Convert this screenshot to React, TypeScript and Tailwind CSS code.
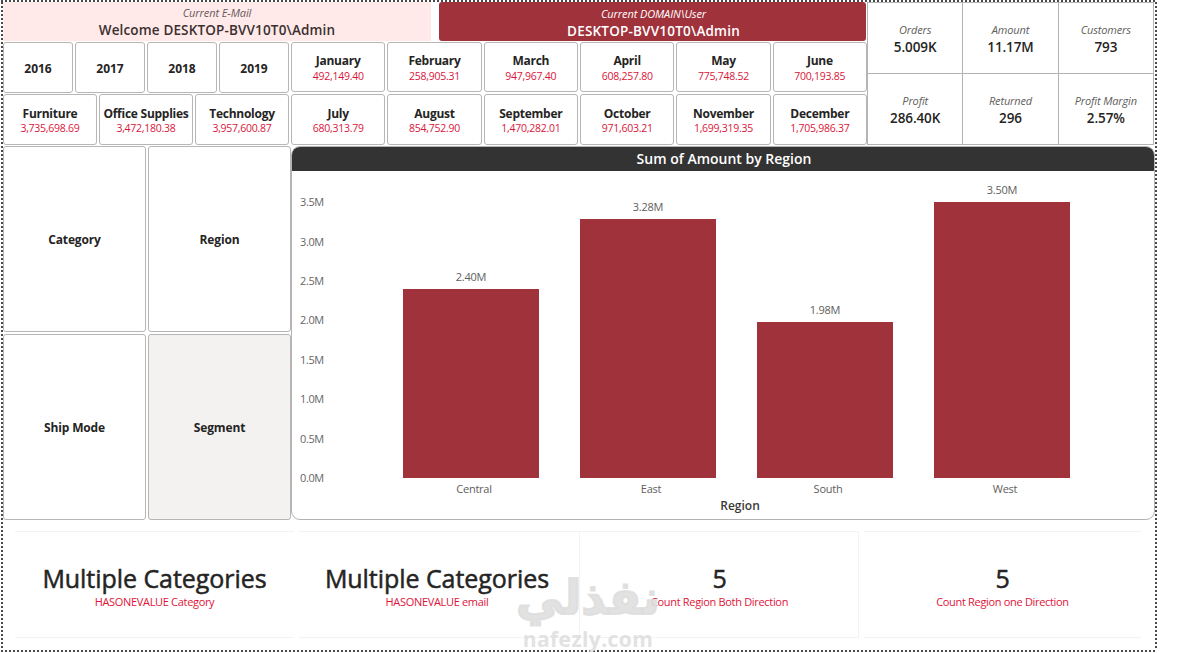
import clsx from "clsx";

type Tile = {
  label: string;
  value: string;
};

const years = ["2016", "2017", "2018", "2019"];

const categories: Tile[] = [
  { label: "Furniture", value: "3,735,698.69" },
  { label: "Office Supplies", value: "3,472,180.38" },
  { label: "Technology", value: "3,957,600.87" },
];

const months: Tile[] = [
  { label: "January", value: "492,149.40" },
  { label: "February", value: "258,905.31" },
  { label: "March", value: "947,967.40" },
  { label: "April", value: "608,257.80" },
  { label: "May", value: "775,748.52" },
  { label: "June", value: "700,193.85" },
  { label: "July", value: "680,313.79" },
  { label: "August", value: "854,752.90" },
  { label: "September", value: "1,470,282.01" },
  { label: "October", value: "971,603.21" },
  { label: "November", value: "1,699,319.35" },
  { label: "December", value: "1,705,986.37" },
];

const kpis: Tile[] = [
  { label: "Orders", value: "5.009K" },
  { label: "Amount", value: "11.17M" },
  { label: "Customers", value: "793" },
  { label: "Profit", value: "286.40K" },
  { label: "Returned", value: "296" },
  { label: "Profit Margin", value: "2.57%" },
];

const slicers = ["Category", "Region", "Ship Mode", "Segment"];

const summaries: Tile[] = [
  { label: "HASONEVALUE Category", value: "Multiple Categories" },
  { label: "HASONEVALUE email", value: "Multiple Categories" },
  { label: "Count Region Both Direction", value: "5" },
  { label: "Count Region one Direction", value: "5" },
];

const summaryStyles = [
  "w-[279px] mr-[5px] border-y",
  "w-[280px] border-y pr-[4px]",
  "w-[280px] mr-[5px] border pl-[1px]",
  "w-[277px] border-y",
];

const bars = [
  { region: "Central", label: "2.40M", x: 111, top: 142 },
  { region: "East", label: "3.28M", x: 288, top: 72 },
  { region: "South", label: "1.98M", x: 465, top: 175 },
  { region: "West", label: "3.50M", x: 642, top: 55 },
];

const ticks = [
  { label: "3.5M", y: 59 },
  { label: "3.0M", y: 99 },
  { label: "2.5M", y: 138 },
  { label: "2.0M", y: 177 },
  { label: "1.5M", y: 217 },
  { label: "1.0M", y: 256 },
  { label: "0.5M", y: 296 },
  { label: "0.0M", y: 335 },
];

const dotsX = "bg-[repeating-linear-gradient(90deg,#4a4a4a_0_2px,#ffffff_2px_4px)]";
const dotsY = "bg-[repeating-linear-gradient(180deg,#4a4a4a_0_2px,#ffffff_2px_4px)]";

function ValueTile({ label, value, tight = false }: Tile & { tight?: boolean }) {
  return (
    <div
      className={clsx(
        "flex flex-col items-center rounded-[3px] border border-[#b8b6b4] whitespace-nowrap",
        tight ? "pt-[12px]" : "pt-[10px]"
      )}
    >
      <span
        className={clsx(
          "text-[12px] font-bold tracking-[-0.25px] text-[#252423]",
          tight ? "leading-[14px]" : "leading-[16px]"
        )}
      >
        {label}
      </span>
      <span className="text-[10.5px] leading-[14px] tracking-[-0.25px] text-[#d9163a]">{value}</span>
    </div>
  );
}

function RegionChart() {
  return (
    <section className="h-[374px] w-[864px] overflow-hidden rounded-[9px] border border-[#b3b3b3]">
      <h2 className="h-[24px] bg-[#333333] pl-[2px] text-center text-[14px] leading-[23px] font-semibold text-white">
        Sum of Amount by Region
      </h2>
      <svg width="862" height="348" viewBox="0 24 862 348" className="block">
        {ticks.map((tick) => (
          <text key={tick.label} x="8" y={tick.y} fontSize="11" letterSpacing="-0.4" fill="#666666">
            {tick.label}
          </text>
        ))}
        {bars.map((bar) => (
          <g key={bar.region} textAnchor="middle" fontSize="11" letterSpacing="-0.25" fill="#605e5c">
            <rect x={bar.x} y={bar.top} width="136" height={331 - bar.top} fill="#a0323c" />
            <text x={bar.x + 68} y={bar.top - 8}>
              {bar.label}
            </text>
            <text x={bar.x + 71} y="346">
              {bar.region}
            </text>
          </g>
        ))}
        <text
          x="448"
          y="363"
          textAnchor="middle"
          fontSize="12"
          fontWeight="600"
          fill="#3b3a39"
        >
          Region
        </text>
      </svg>
    </section>
  );
}

export default function App() {
  return (
    <div className="h-[653px] w-[1178px] overflow-hidden bg-white font-['Open_Sans','Noto_Sans',sans-serif]">
      <main className="relative ml-px flex h-[652px] w-[1156px] flex-col">
        <div className={clsx("h-[2px] shrink-0", dotsX)} />
        <div className="flex h-[648px]">
          <div className={clsx("w-[2px] shrink-0", dotsY)} />

          <div className="flex w-[1152px] shrink-0 flex-col">
            <div className="flex h-[144px]">
              <div className="w-[864px] shrink-0">
                <header className="flex h-[39px] gap-[8px] text-center whitespace-nowrap">
                  <div className="w-[428px] bg-[#ffe9e9] pt-[3px] text-[#3b3030]">
                    <p className="text-[11px] leading-[16px] tracking-[-0.1px] text-[#665b5b] italic">
                      Current E-Mail
                    </p>
                    <p className="text-[13.5px] leading-[18px] font-semibold tracking-[0.15px]">
                      Welcome DESKTOP-BVV10T0\Admin
                    </p>
                  </div>
                  <div className="w-[427px] rounded-[3px] bg-[#a0323c] pt-[4px] pl-[2px] text-white">
                    <p className="text-[11px] leading-[16px] tracking-[-0.1px] italic">
                      Current DOMAIN\User
                    </p>
                    <p className="text-[13.5px] leading-[18px] font-semibold tracking-[0.2px]">
                      DESKTOP-BVV10T0\Admin
                    </p>
                  </div>
                </header>

                <div className="flex gap-[2px] pt-px">
                  <div className="flex w-[286px] flex-col gap-px">
                    <div className="grid h-[51px] grid-cols-4 gap-[2px]">
                      {years.map((year) => (
                        <div
                          key={year}
                          className="flex items-center justify-center rounded-[3px] border border-[#b8b6b4] pt-[2px] text-[12px] font-bold text-[#252423]"
                        >
                          {year}
                        </div>
                      ))}
                    </div>
                    <div className="grid h-[51px] grid-cols-3 gap-[2px]">
                      {categories.map((category) => (
                        <ValueTile key={category.label} {...category} tight />
                      ))}
                    </div>
                  </div>
                  <div className="grid h-[103px] w-[576px] grid-cols-6 grid-rows-[50px_51px] gap-[2px]">
                    {months.map((month, i) => (
                      <ValueTile key={month.label} {...month} tight={i > 5} />
                    ))}
                  </div>
                </div>
              </div>

              <div className="grid h-[143px] w-[287px] grid-cols-3 grid-rows-2 border-t border-l border-[#b3b3b3]">
                {kpis.map((kpi) => (
                  <div
                    key={kpi.label}
                    className="flex flex-col items-center border-r border-b border-[#b3b3b3] pt-[19px]"
                  >
                    <span className="text-[11px] leading-[16px] tracking-[-0.15px] text-[#605e5c] italic">
                      {kpi.label}
                    </span>
                    <span className="text-[13.5px] leading-[18px] font-semibold tracking-[-0.1px] text-[#252423]">
                      {kpi.value}
                    </span>
                  </div>
                ))}
              </div>
            </div>

            <div className="flex h-[374px]">
              <div className="grid w-[288px] grid-cols-2 grid-rows-2 gap-[2px]">
                {slicers.map((name) => (
                  <div
                    key={name}
                    className={clsx(
                      "flex items-center justify-center rounded-[3px] border border-[#b8b6b4] pt-[2px] text-[12px] font-bold tracking-[-0.15px] text-[#252423]",
                      name === "Segment" && "bg-[#f3f2f1]"
                    )}
                  >
                    {name}
                  </div>
                ))}
              </div>
              <RegionChart />
            </div>

            <div className="mt-[11px] flex h-[107px] pl-[12px]">
              {summaries.map((item, i) => (
                <div
                  key={item.label}
                  className={clsx(
                    "flex shrink-0 flex-col items-center border-[#f3f3f3] pt-[29px] whitespace-nowrap",
                    summaryStyles[i]
                  )}
                >
                  <span className="text-[25px] leading-[34px] tracking-[-0.05px] text-[#252423] [-webkit-text-stroke:0.5px_#252423]">
                    {item.value}
                  </span>
                  <span className="text-[11px] leading-[13px] tracking-[-0.32px] text-[#e0143a]">
                    {item.label}
                  </span>
                </div>
              ))}
            </div>
          </div>

          <div className={clsx("w-[2px] shrink-0", dotsY)} />
        </div>
        <div className={clsx("h-[2px] shrink-0", dotsX)} />

        <div className="pointer-events-none absolute top-[568px] left-[514px] flex h-[84px] w-[146px] flex-col items-center font-['DejaVu_Sans',sans-serif] whitespace-nowrap text-[#dedede]/90">
          <span dir="rtl" className="text-[47px] leading-[60px] font-bold [-webkit-text-stroke:2px]">
            نفذلي
          </span>
          <span className="font-['Open_Sans',sans-serif] text-[21px] leading-[22px] font-bold tracking-[0.4px]">
            nafezly.com
          </span>
        </div>
      </main>
    </div>
  );
}
